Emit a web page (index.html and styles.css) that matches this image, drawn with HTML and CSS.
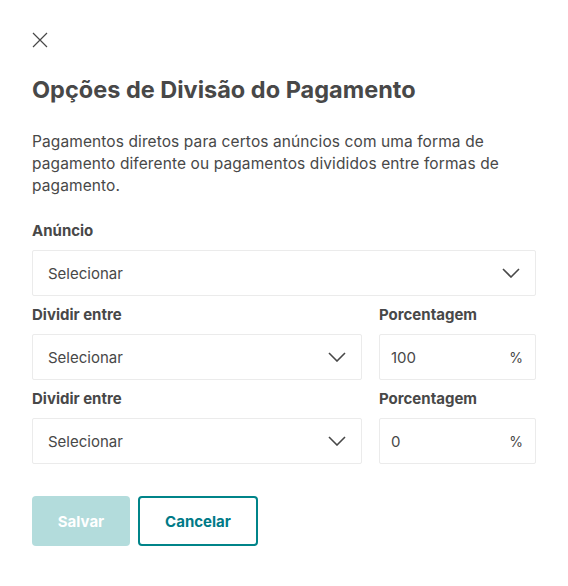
FILE: index.html
```html
<!DOCTYPE html>
<html lang="pt">
<head>
<meta charset="utf-8">
<link rel="stylesheet" href="styles.css">
</head>
<body>
<div class="modal">
  <button class="close" aria-label="Fechar">
    <svg width="16" height="16" viewBox="0 0 16 16"><path d="M1 1L15 15M15 1L1 15" stroke="#484848" stroke-width="1.2" fill="none"/></svg>
  </button>
  <h1 class="title">Opções de Divisão do Pagamento</h1>
  <p class="desc">Pagamentos diretos para certos anúncios com uma forma de pagamento diferente ou pagamentos divididos entre formas de pagamento.</p>

  <div class="field">
    <div class="label">Anúncio</div>
    <div class="select"><span>Selecionar</span><svg class="chev" width="18" height="10" viewBox="0 0 18 10"><path d="M1 1L9 9L17 1" stroke="#484848" stroke-width="1.6" fill="none"/></svg></div>
  </div>

  <div class="row">
    <div class="field grow">
      <div class="label">Dividir entre</div>
      <div class="select"><span>Selecionar</span><svg class="chev" width="18" height="10" viewBox="0 0 18 10"><path d="M1 1L9 9L17 1" stroke="#484848" stroke-width="1.6" fill="none"/></svg></div>
    </div>
    <div class="field pct">
      <div class="label">Porcentagem</div>
      <div class="input"><span>100</span><span class="unit">%</span></div>
    </div>
  </div>

  <div class="row">
    <div class="field grow">
      <div class="label">Dividir entre</div>
      <div class="select"><span>Selecionar</span><svg class="chev" width="18" height="10" viewBox="0 0 18 10"><path d="M1 1L9 9L17 1" stroke="#484848" stroke-width="1.6" fill="none"/></svg></div>
    </div>
    <div class="field pct">
      <div class="label">Porcentagem</div>
      <div class="input"><span>0</span><span class="unit">%</span></div>
    </div>
  </div>

  <div class="actions">
    <button class="btn primary">Salvar</button>
    <button class="btn secondary">Cancelar</button>
  </div>
</div>
</body>
</html>
```

FILE: styles.css
```css
* { box-sizing: border-box; }
html, body { margin: 0; padding: 0; background: #ffffff; }
body {
  font-family: "Inter", "Liberation Sans", sans-serif;
  color: #484848;
}
.modal {
  width: 568px;
  padding: 32px 32px 0 32px;
  display: flex;
  flex-direction: column;
}
.close {
  width: 16px;
  height: 16px;
  padding: 0;
  border: 0;
  background: none;
  display: block;
}
.close svg { display: block; }
.title {
  margin: 27px 0 0 0;
  font-size: 23.5px;
  line-height: 30px;
  font-weight: 700;
  color: #484848;
}
.desc {
  margin: 26px 0 0 0;
  font-size: 15.5px;
  line-height: 22px;
  letter-spacing: 0.1px;
}
.field { display: flex; flex-direction: column; }
.desc + .field { margin-top: 24px; }
.label {
  font-size: 15px;
  line-height: 20px;
  font-weight: 700;
  margin-bottom: 9px;
}
.select, .input {
  height: 46px;
  border: 1px solid #ebebeb;
  border-radius: 2px;
  display: flex;
  align-items: center;
  justify-content: space-between;
  padding: 0 15px;
  font-size: 15px;
}
.input { padding: 0 12px 0 11px; }
.row {
  display: flex;
  gap: 17px;
  margin-top: 9px;
}
.grow { flex: 1; }
.pct { width: 157px; }
.chev { display: block; }
.unit { font-size: 14px; }
.actions {
  display: flex;
  gap: 8px;
  margin-top: 32px;
}
.btn {
  height: 50px;
  border-radius: 4px;
  font-family: inherit;
  font-size: 15px;
  font-weight: 700;
  padding: 0 12px;
}
.primary {
  width: 98px;
  background: #b3dcdc;
  color: #ffffff;
  border: 0;
}
.secondary {
  width: 120px;
  background: #ffffff;
  color: #007a87;
  border: 2px solid #008489;
}
```
